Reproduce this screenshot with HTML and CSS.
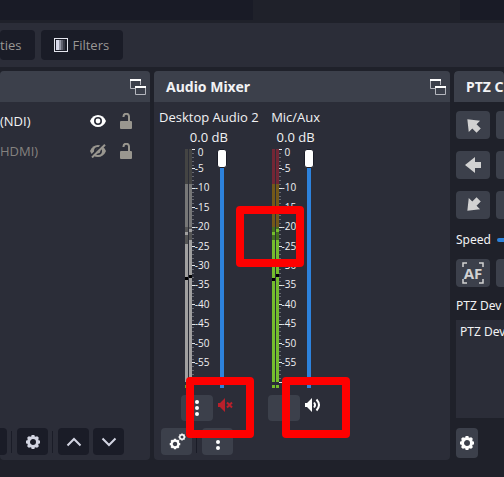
FILE: index.html
```html
<!DOCTYPE html>
<html lang="en">
<head>
<meta charset="utf-8">
<title>Audio Mixer</title>
<link rel="stylesheet" href="styles.css">
</head>
<body>
<svg class="defs" aria-hidden="true">
  <symbol id="float" viewBox="0 0 16 16">
    <path d="M.5 1v8.500h5M10.500 1v5" fill="none" stroke="#b4b6bd"/><path d="M0 0h11v2H0z" fill="#fefefe"/>
    <path d="M5.500 7v8.500h10V7" fill="none" stroke="#b4b6bd"/><path d="M5 7h11v2H5z" fill="#fefefe"/>
  </symbol>
  <symbol id="lock" viewBox="0 0 12 16">
    <path d="M3.500 4V3.500a2.500 2.500 0 0 1 5.500 0V9" fill="none" stroke="currentColor" stroke-width="2"/>
    <rect y="8" width="12" height="8" rx="1" fill="currentColor"/>
  </symbol>
  <symbol id="gear" viewBox="0 0 16 16">
    <circle cx="8" cy="8" r="4.500" fill="none" stroke="currentColor" stroke-width="3"/>
    <path d="M8 1v2M8 13v2M1 8h2M13 8h2M3 3l1.500 1.500M11.500 11.500L13 13M3 13l1.500-1.500M11.500 4.500L13 3" stroke="currentColor" stroke-width="3"/>
  </symbol>
  <symbol id="kebab" viewBox="0 0 16 16">
    <g fill="currentColor"><circle cx="8" cy="2" r="2"/><circle cx="8" cy="8" r="2"/><circle cx="8" cy="14" r="2"/></g>
  </symbol>
  <symbol id="arrow" viewBox="0 0 18 18">
    <path d="M1 9l10-8v5h6v6h-6v5z" fill="#d2d2d2"/>
  </symbol>
</svg>

<div class="preview"><div></div><div></div></div>

<div class="source-bar">
  <button class="dark">ties</button>
  <button class="dark">
    <svg width="14" height="14" viewBox="0 0 14 14"><rect x=".5" y=".5" width="13" height="13" fill="#1a1c27" stroke="#e4e5ee"/><path d="M2 2h3v10H2z" fill="#d8daea"/><path d="M5 2h2v10H5z" fill="#9698a6"/><path d="M7 2h2v10H7z" fill="#60626f"/><path d="M9 2h2v10H9z" fill="#383a46"/></svg>
    Filters
  </button>
</div>

<main class="docks">
  <section class="dock sources">
    <header><button class="icon" aria-label="Float sources"><svg width="16" height="16"><use href="#float"/></svg></button></header>
    <ul>
      <li><span>(NDI)</span>
        <button class="icon" aria-label="Hide"><svg width="16" height="12" viewBox="0 0 16 12"><path d="M0 6C3-2 13-2 16 6C13 14 3 14 0 6z" fill="#fff"/><circle cx="8" cy="6" r="3.200" fill="none" stroke="#2b2d38" stroke-width="1.600"/></svg></button>
        <button class="icon lock" aria-label="Lock"><svg width="12" height="16"><use href="#lock"/></svg></button></li>
      <li class="off"><span>HDMI)</span>
        <button class="icon" aria-label="Show"><svg width="16" height="14" viewBox="0 0 16 14"><path d="M0 7C3-1 13-1 16 7C13 15 3 15 0 7z" fill="#99968f"/><circle cx="8" cy="7" r="3.200" fill="none" stroke="#2b2d38" stroke-width="1.600"/><path d="M1 12L13 0" stroke="#2b2d38" stroke-width="2"/><path d="M2 13.500L15 .8" stroke="#99968f" stroke-width="2"/></svg></button>
        <button class="icon lock" aria-label="Lock"><svg width="12" height="16"><use href="#lock"/></svg></button></li>
    </ul>
    <footer>
      <button class="dark stub" aria-label="Remove"></button><i></i>
      <button class="dark tool" aria-label="Settings"><svg width="16" height="16"><use href="#gear"/></svg></button><i></i>
      <button class="dark tool" aria-label="Move up"><svg width="16" height="10" viewBox="0 0 16 10"><path d="M1.500 8.500L8 2l6.500 6.500" fill="none" stroke="currentColor" stroke-width="2"/></svg></button>
      <button class="dark tool" aria-label="Move down"><svg width="16" height="10" viewBox="0 0 16 10"><path d="M1.500 1.500L8 8l6.500-6.500" fill="none" stroke="currentColor" stroke-width="2"/></svg></button>
    </footer>
  </section>

  <section class="dock mixer">
    <header><h2>Audio Mixer</h2><button class="icon" aria-label="Float mixer"><svg width="16" height="16"><use href="#float"/></svg></button></header>
    <div class="channels">
      <div class="channel">
        <label for="vol1">Desktop Audio 2</label>
        <output for="vol1">0.0 dB</output>
        <div class="levels">
          <svg width="10" height="239" viewBox="0 0 10 239" shape-rendering="crispEdges">
            <path d="M0 0h3v35H0zM4 0h3v35H4z" fill="#444443"/>
            <path d="M0 35h3v43H0zM4 35h3v43H4z" fill="#777777"/>
            <path d="M0 78h3v17H0zM4 78h3v13H4z" fill="#555555"/>
            <path d="M0 83h3v3H0zM4 80h3v3H4zM0 95h3v138H0zM4 91h3v142H4z" fill="#a1a0a0"/>
            <path d="M0 128h3v3H0zM4 126h3v3H4z" fill="#000"/>
            <path d="M0 236h3v3H0zM4 236h3v3H4z" fill="#76982c"/>
            <path d="M8 0v234" stroke="#666872" stroke-width="2" stroke-dasharray="1 2.880"/>
            <path d="M8.500 0v234" stroke="#e4e4e6" stroke-width="3" stroke-dasharray="1 18.400"/>
          </svg>
          <div class="scale"><span>0</span><div><span>-5</span><span>-10</span><span>-15</span><span>-20</span><span>-25</span><span>-30</span><span>-35</span><span>-40</span><span>-45</span><span>-50</span><span>-55</span></div></div>
          <input type="range" id="vol1" value="100">
        </div>
        <div class="controls">
          <button class="light" aria-label="Desktop Audio 2 options"><svg width="16" height="16"><use href="#kebab"/></svg></button>
          <button class="icon muted" aria-label="Unmute"><svg width="18" height="14" viewBox="0 0 18 14"><path d="M1 5h2l5-5v14l-5-5H1z" fill="currentColor"/><path d="M10 4.500l5 5M15 4.500l-5 5" stroke="currentColor" stroke-width="2"/></svg></button>
        </div>
      </div>
      <div class="channel">
        <label for="vol2">Mic/Aux</label>
        <output for="vol2">0.0 dB</output>
        <div class="levels">
          <svg width="10" height="239" viewBox="0 0 10 239" shape-rendering="crispEdges">
            <path d="M0 0h3v35H0zM4 0h3v35H4z" fill="#732635"/>
            <path d="M0 35h3v43H0zM4 35h3v43H4z" fill="#735819"/>
            <path d="M0 78h3v13H0zM4 78h3v13H4z" fill="#44701d"/>
            <path d="M0 83h3v3H0zM4 80h3v3H4zM0 91h3v142H0zM4 91h3v142H4zM0 236h3v3H0zM4 236h3v3H4z" fill="#74bd2d"/>
            <path d="M0 129h3v3H0zM4 125h3v3H4z" fill="#000"/>
            <path d="M8 0v234" stroke="#666872" stroke-width="2" stroke-dasharray="1 2.880"/>
            <path d="M8.500 0v234" stroke="#e4e4e6" stroke-width="3" stroke-dasharray="1 18.400"/>
          </svg>
          <div class="scale"><span>0</span><div><span>-5</span><span>-10</span><span>-15</span><span>-20</span><span>-25</span><span>-30</span><span>-35</span><span>-40</span><span>-45</span><span>-50</span><span>-55</span></div></div>
          <input type="range" id="vol2" value="100">
          <mark class="level-mark"></mark>
        </div>
        <div class="controls">
          <button class="light" aria-label="Mic/Aux options"><svg width="16" height="16"><use href="#kebab"/></svg></button>
          <button class="icon" aria-label="Mute"><svg width="18" height="14" viewBox="0 0 18 14"><path d="M1 5h2l5-5v14l-5-5H1z" fill="currentColor"/><path d="M10 4.500q2 2.500 0 5M12.500 1.500q5 5.500 0 11" fill="none" stroke="currentColor" stroke-width="2"/></svg></button>
          <mark></mark>
        </div>
      </div>
    </div>
    <footer>
      <button class="light tool" aria-label="Advanced audio"><svg width="18" height="18" viewBox="0 0 18 18"><use href="#gear" x="1" y="5" width="12" height="12"/><use href="#gear" x="10" y="0" width="8" height="8"/></svg></button><i></i>
      <button class="light tool" aria-label="Mixer options"><svg width="16" height="16"><use href="#kebab"/></svg></button>
      <mark></mark>
    </footer>
  </section>

  <section class="dock ptz">
    <header><h2>PTZ C</h2></header>
    <div class="pad">
      <button class="light" aria-label="Up left"><svg class="nw" width="18" height="18"><use href="#arrow"/></svg></button><button class="light" aria-label="Up"></button>
      <button class="light" aria-label="Left"><svg width="18" height="18"><use href="#arrow"/></svg></button><button class="light" aria-label="Stop"></button>
      <button class="light" aria-label="Down left"><svg class="sw" width="18" height="18"><use href="#arrow"/></svg></button><button class="light" aria-label="Down"></button>
    </div>
    <div class="speed"><label for="speed">Speed</label><input type="range" id="speed"></div>
    <div class="pad">
      <button class="light af"><svg width="22" height="22" viewBox="0 0 22 22"><path d="M1 5V1h4M17 1h4v4M21 17v4h-4M5 21H1v-4" fill="none" stroke="#d2d2d2" stroke-width="1.500"/></svg><span>AF</span></button><button class="light" aria-label="Focus"></button>
    </div>
    <h3>PTZ Dev</h3>
    <ul><li>PTZ Dev</li></ul>
    <button class="light cog" aria-label="PTZ settings"><svg width="16" height="16"><use href="#gear"/></svg></button>
  </section>
</main>
</body>
</html>
```

FILE: styles.css
```css
* { box-sizing: border-box; }

body {
  margin: 0;
  min-height: 100vh;
  padding-bottom: 17px;
  display: flex;
  flex-direction: column;
  overflow: hidden;
  background: #1f212a;
  color: #f2f2f4;
  font: 13px/20px "Open Sans", "Noto Sans", sans-serif;
}

.defs { position: absolute; width: 0; height: 0; }
svg { display: block; flex: none; }
h2, h3, ul { margin: 0; padding: 0; list-style: none; font-weight: normal; }

button {
  display: flex;
  align-items: center;
  justify-content: center;
  flex: none;
  padding: 0;
  border: 0;
  border-radius: 4px;
  font: inherit;
  color: #fefefe;
}
.icon { background: none; }
.light { background: #3c404b; }
.dark { background: #1a1c27; color: #d3d5e2; }
.tool { width: 31px; height: 27px; }

.preview {
  display: grid;
  grid-template-columns: 252fr 44fr;
  gap: 41%;
  height: 20px;
  margin-bottom: 3px;
}
.preview div { background: #191b26; }

.source-bar {
  display: flex;
  align-items: center;
  gap: 6px;
  height: 44px;
  margin-bottom: 4px;
  background: #2b2d38;
}
.source-bar button { height: 30px; gap: 4px; padding: 0 14px 0 13px; color: #999795; }
.source-bar button:first-child { padding-left: 0; }

.docks {
  flex: 1;
  display: grid;
  grid-template-columns: 150fr 296fr 50fr;
  gap: 4px;
}
.dock {
  display: flex;
  flex-direction: column;
  min-width: 0;
  border-radius: 4px;
  background: #2b2d38;
}
.dock header {
  display: flex;
  align-items: center;
  height: 31px;
  padding: 0 4px 0 12px;
  border-radius: 4px 4px 0 0;
  background: #3c404b;
}
.dock header button { margin-left: auto; }
.dock h2 { font: bold 14px/20px "Noto Sans", "Open Sans", sans-serif; white-space: nowrap; }
.dock footer {
  position: relative;
  display: flex;
  align-items: center;
  gap: 4px;
  margin-top: auto;
  padding-bottom: 5px;
}
.dock footer i { width: 2px; height: 22px; border-left: 1px solid #1a1c27; }

.sources ul { padding-top: 4px; }
.sources li { display: flex; align-items: center; height: 30px; padding-right: 18px; }
.sources li span { flex: 1; }
.sources .off { color: #85827f; }
.sources .lock { margin-left: 14px; color: #99968f; }
.sources .stub { width: 7px; height: 27px; border-radius: 0 4px 4px 0; }

.channels { display: flex; gap: 9px; padding: 5px 5px 0; }
.channel { display: flex; flex-direction: column; align-items: center; min-width: 56px; }
.channel label { white-space: nowrap; }
.channel output { margin-top: 2px; line-height: 16px; }
.levels { position: relative; display: flex; width: 48px; margin-top: 4px; }
.scale {
  width: 21px;
  height: 222px;
  margin-top: -3px;
  display: flex;
  flex-direction: column;
  justify-content: space-between;
  font: 10px/12px "Open Sans", "Noto Sans", sans-serif;
}
.scale > span { padding-left: 3px; }
.scale div { display: flex; flex-direction: column; justify-content: space-between; height: 206px; }
.levels input {
  appearance: none;
  writing-mode: vertical-lr;
  direction: rtl;
  width: 12px;
  height: 239px;
  margin: 0;
  background: linear-gradient(#2d82dc, #2d82dc) center / 4px 100% no-repeat;
}
.levels input::-webkit-slider-thumb {
  appearance: none;
  width: 10px;
  height: 19px;
  border: 1px solid #1a1c27;
  border-radius: 3px;
  background: #fff;
}

.controls { position: relative; display: flex; gap: 4px; width: 56px; margin-top: 7px; }
.controls .light { width: 32px; height: 26px; }
.controls .icon { width: 18px; height: 20px; }
.muted { color: #b9202b; }

/* Highlight frames laid over the mixer */
mark {
  position: absolute;
  left: 14px;
  top: -18px;
  z-index: 1;
  width: 68px;
  height: 61px;
  border: 8px solid #fe0000;
  border-radius: 4px;
  background: none;
  pointer-events: none;
}
.level-mark { left: -36px; top: 57px; }
.mixer footer { padding-left: 7px; }
.mixer footer mark { left: 32px; top: -51px; }

.ptz { overflow: hidden; background: none; }
.pad { display: flex; flex-wrap: wrap; width: 80px; gap: 12px 6px; padding: 9px 0 0 2px; }
.pad button { width: 34px; height: 28px; }
.nw { transform: rotate(45deg); }
.sw { transform: rotate(-45deg); }
.speed { display: flex; align-items: center; gap: 6px; height: 20px; margin-top: 11px; padding-left: 2px; }
.speed input {
  appearance: none;
  flex: none;
  width: 80px;
  height: 4px;
  margin: 0;
  border-radius: 2px;
  background: #2d82dc;
}
.af { position: relative; }
.af span {
  position: absolute;
  color: #d2d2d2;
  font: bold 15px/16px "Liberation Sans Narrow", "Open Sans", sans-serif;
}
.speed, .ptz h3, .ptz li { font: 12px/20px "Noto Sans", "Open Sans", sans-serif; }
.ptz h3 { margin-top: 9px; padding-left: 2px; white-space: nowrap; }
.ptz ul { flex: 1; margin: 4px 0 10px 2px; padding: 2px 4px; background: #2b2d38; white-space: nowrap; }
.cog { width: 22px; height: 30px; margin: 0 0 2px 2px; }
```
